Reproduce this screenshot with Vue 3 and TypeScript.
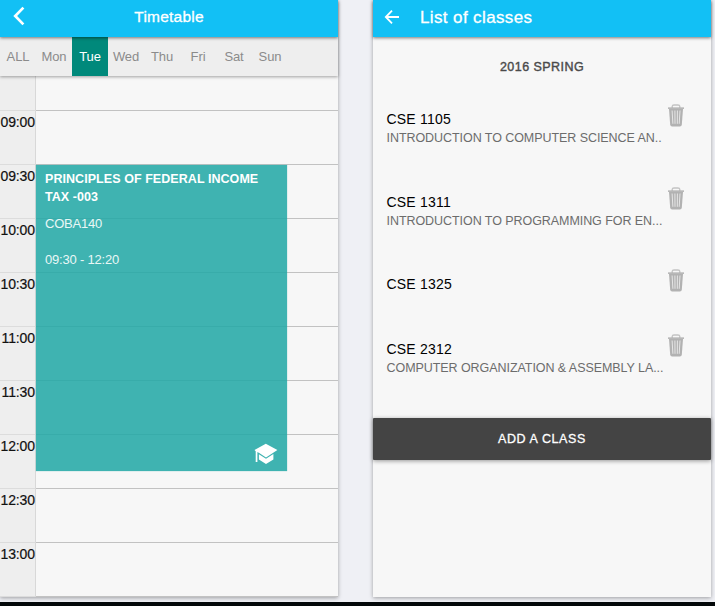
<script setup lang="ts">
interface ClassItem {
  code: string
  title: string
}

const days: string[] = ['ALL', 'Mon', 'Tue', 'Wed', 'Thu', 'Fri', 'Sat', 'Sun']
const activeDay = 'Tue'
const hours: string[] = ['', '09:00', '09:30', '10:00', '10:30', '11:00', '11:30', '12:00', '12:30', '13:00']
const classes: ClassItem[] = [
  { code: 'CSE 1105', title: 'INTRODUCTION TO COMPUTER SCIENCE AN..' },
  { code: 'CSE 1311', title: 'INTRODUCTION TO PROGRAMMING FOR EN...' },
  { code: 'CSE 1325', title: '' },
  { code: 'CSE 2312', title: 'COMPUTER ORGANIZATION & ASSEMBLY LA...' },
]
</script>

<template>
  <main class="stage">
    <section class="panel">
      <header class="bar centered">
        <svg class="back" width="12" height="20" viewBox="0 0 12 20"><path d="M10.4 1.6 2.2 10l8.2 8.4" fill="none" stroke="#fff" stroke-width="2.7" /></svg>
        <h1 class="title small">Timetable</h1>
      </header>
      <nav class="days">
        <button v-for="d in days" :key="d" class="day" :class="{ active: d === activeDay }">{{ d }}</button>
      </nav>
      <div class="grid">
        <div v-for="h in hours" :key="h" class="row" :class="{ first: !h }">
          <span class="hour">{{ h }}</span>
          <span class="slot"></span>
        </div>
        <article class="event">
          <h2 class="event-name">PRINCIPLES OF FEDERAL INCOME<br />TAX -003</h2>
          <p class="room">COBA140</p>
          <p class="time">09:30 - 12:20</p>
          <svg class="cap" width="24" height="22" viewBox="0 0 24 22" fill="#fff">
            <path d="M11.8 .8 23.400 7 12 14.400 5.600 10.200 3.400 9V19H1.700V8.200L.5 7z" />
            <path d="M4.900 11.200 12 15.700l7.400-4.700v5.400L12 21l-7.100-4.600z" />
          </svg>
        </article>
      </div>
    </section>

    <section class="panel">
      <header class="bar">
        <svg class="arrow" width="16" height="16" viewBox="0 0 16 16"><path d="M8 1.600 1.800 8 8 14.400M1.800 8H15" fill="none" stroke="#fff" stroke-width="1.800" /></svg>
        <h1 class="title">List of classes</h1>
      </header>
      <h2 class="term">2016 SPRING</h2>
      <ul class="classes">
        <li v-for="c in classes" :key="c.code" class="item" :class="{ short: !c.title }">
          <div class="info">
            <div class="code">{{ c.code }}</div>
            <div v-if="c.title" class="desc">{{ c.title }}</div>
          </div>
          <svg class="trash" width="16" height="23" viewBox="0 0 16 23">
            <path d="M4.200 4V2.400Q4.300 1 6 1h4q1.700 0 1.800 1.400V4" fill="none" stroke="#c4c4c4" stroke-width="1.300" />
            <path d="M0 3.400h16v1.500H0z" fill="#b0b0b0" />
            <path d="M1 5h14l-1.200 15.700q-.2 1.700-1.900 1.700H4.100q-1.700 0-1.900-1.700z" fill="#b2b2b2" />
            <path d="m4.100 6.500.8 13.300M6.900 6.500l.1 13.300M9.400 6.500l-.1 13.300M12 6.500l-.8 13.300" stroke="#e6e6e6" stroke-width="1" />
          </svg>
        </li>
      </ul>
      <button class="add">ADD A CLASS</button>
    </section>
  </main>
</template>

<style>
body {
  overflow: hidden;
  background: #eff0f5;
}
</style>

<style scoped>
.stage {
  box-sizing: border-box;
  display: flex;
  gap: 35px;
  height: 606px;
  border-bottom: 4px solid #030809;
  font-family: "Liberation Sans", Arial, sans-serif;
}
h1, h2, p, ul {
  margin: 0;
  padding: 0;
  font-weight: 400;
}
button {
  border: 0;
  padding: 0;
  font-family: inherit;
}
.panel {
  flex: none;
  width: 338px;
  height: 597px;
  background: #f7f7f7;
  box-shadow: 0 1px 4px rgba(0, 0, 0, 0.35);
  clip-path: inset(0 -6px -5px -6px);
}
.bar {
  position: relative;
  z-index: 3;
  display: flex;
  align-items: center;
  height: 37px;
  background: #12c0f5;
  box-shadow: 0 1px 3px rgba(0, 0, 0, 0.5);
}
.centered {
  justify-content: center;
}
.back {
  position: absolute;
  left: 13px;
  top: 6px;
}
.arrow {
  margin: -3px 0 0 11px;
}
.title {
  margin: -2px 0 0 20px;
  color: #fff;
  font-size: 17px;
  line-height: 20px;
  letter-spacing: 0.38px;
  -webkit-text-stroke: 0.3px #fff;
}
.small {
  margin: -3px 0 0;
  font-size: 15.5px;
  letter-spacing: 0.22px;
}
.days {
  position: relative;
  z-index: 2;
  display: flex;
  height: 39px;
  background: #eee;
  box-shadow: 0 1px 3px rgba(0, 0, 0, 0.35);
}
.day {
  width: 36px;
  background: none;
  color: #8b8b8b;
  font-size: 13px;
  line-height: 39px;
  text-align: center;
  letter-spacing: -0.1px;
}
.active {
  background: #00897b;
  color: #fff;
}
.grid {
  position: relative;
}
.row {
  display: flex;
  height: 54px;
}
.first {
  height: 35px;
}
.hour {
  box-sizing: border-box;
  width: 36px;
  padding: 2px 0 0;
  border-right: 1px solid #d8d8d8;
  border-bottom: 1px solid #dcdcdc;
  background: #eee;
  color: #111;
  font-size: 14px;
  line-height: 18px;
  text-align: right;
  letter-spacing: -0.1px;
  -webkit-text-stroke: 0.2px #111;
}
.slot {
  flex: 1;
  border-bottom: 1px solid #c2c2c2;
}
.event {
  position: absolute;
  left: 36px;
  top: 89px;
  box-sizing: border-box;
  width: 251px;
  height: 306px;
  padding: 5px 9px;
  background: rgba(36, 169, 166, 0.87);
  box-shadow: 0 0 1px rgba(38, 170, 167, 0.6);
  color: #fff;
}
.event-name {
  font-size: 12.5px;
  font-weight: 700;
  line-height: 18px;
  letter-spacing: 0.06px;
}
.room, .time {
  color: #e9f7f6;
  font-size: 13px;
  line-height: 18px;
  letter-spacing: -0.2px;
}
.room {
  margin-top: 9px;
}
.time {
  margin-top: 18px;
}
.cap {
  position: absolute;
  right: 9px;
  bottom: 6px;
}
.term {
  margin-top: 21px;
  color: #4a4a4a;
  font-size: 12.5px;
  line-height: 18px;
  text-align: center;
  letter-spacing: 0.45px;
  -webkit-text-stroke: 0.4px #4a4a4a;
}
.classes {
  margin-top: 28px;
  list-style: none;
}
.item {
  display: flex;
  justify-content: space-between;
  height: 82.5px;
  padding: 0 27px 0 13.5px;
}
.short {
  height: 65px;
}
.info {
  padding-top: 6px;
  white-space: nowrap;
}
.code {
  color: #000;
  font-size: 14px;
  line-height: 18px;
  letter-spacing: 0.2px;
}
.desc {
  color: #6c6c6c;
  font-size: 12.5px;
  line-height: 20px;
  letter-spacing: -0.06px;
}
.add {
  display: block;
  width: 100%;
  height: 42px;
  margin-top: 1px;
  border-radius: 1px;
  background: #444;
  box-shadow: 0 1px 4px rgba(0, 0, 0, 0.4);
  color: #fff;
  font-size: 12.5px;
  letter-spacing: 0.6px;
  -webkit-text-stroke: 0.3px #fff;
}
</style>
